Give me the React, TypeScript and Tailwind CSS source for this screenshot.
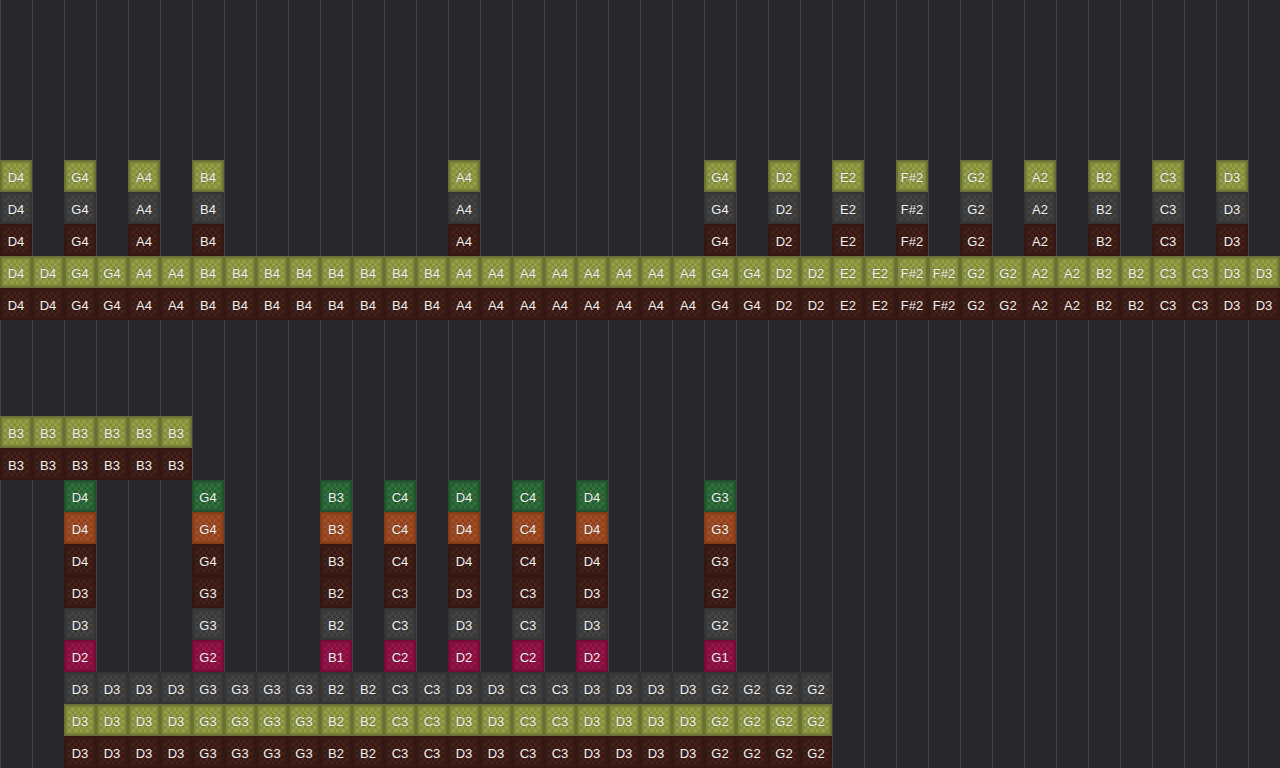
const styles = {
  olive: { frame: "border-[#6a7135]", rim: "border-[#838c3d]", fill: "bg-[conic-gradient(#99a24a_25%,#838c3c_0_50%,#99a24a_0_75%,#838c3c_0)]" },
  gray: { frame: "border-[#343435]", rim: "border-[#3b3b3c]", fill: "bg-[conic-gradient(#464647_25%,#383839_0_50%,#464647_0_75%,#383839_0)]" },
  brown: { frame: "border-[#331712]", rim: "border-[#3a1b15]", fill: "bg-[conic-gradient(#47221b_25%,#371913_0_50%,#47221b_0_75%,#371913_0)]" },
  green: { frame: "border-[#22522c]", rim: "border-[#286134]", fill: "bg-[conic-gradient(#32733e_25%,#265d31_0_50%,#32733e_0_75%,#265d31_0)]" },
  orange: { frame: "border-[#843d1a]", rim: "border-[#94461f]", fill: "bg-[conic-gradient(#a55029_25%,#8d421d_0_50%,#a55029_0_75%,#8d421d_0)]" },
  pink: { frame: "border-[#750c37]", rim: "border-[#881041]", fill: "bg-[conic-gradient(#9a164c_25%,#830f3f_0_50%,#9a164c_0_75%,#830f3f_0)]" },
};

type Kind = keyof typeof styles;
type Row = { kind: Kind; start: number; notes: string[] } | null;

const repeat = (spec: [string, number][]) => spec.flatMap(([n, c]) => Array<string>(c).fill(n));
const sparse = (spec: [number, string][]) => {
  const out: string[] = Array(40).fill("");
  spec.forEach(([i, n]) => (out[i] = n));
  return out;
};

const top = sparse([[0, "D4"], [2, "G4"], [4, "A4"], [6, "B4"], [14, "A4"], [22, "G4"], [24, "D2"], [26, "E2"], [28, "F#2"], [30, "G2"], [32, "A2"], [34, "B2"], [36, "C3"], [38, "D3"]]);
const wide = repeat([["D4", 2], ["G4", 2], ["A4", 2], ["B4", 8], ["A4", 8], ["G4", 2], ["D2", 2], ["E2", 2], ["F#2", 2], ["G2", 2], ["A2", 2], ["B2", 2], ["C3", 2], ["D3", 2]]);
const b3 = repeat([["B3", 6]]);
const colsAt = (n: string[]) => sparse([2, 6, 10, 12, 14, 16, 18, 22].map((c, i) => [c, n[i]] as [number, string]));
const upper = colsAt(["D4", "G4", "B3", "C4", "D4", "C4", "D4", "G3"]);
const middle = colsAt(["D3", "G3", "B2", "C3", "D3", "C3", "D3", "G2"]);
const lower = colsAt(["D2", "G2", "B1", "C2", "D2", "C2", "D2", "G1"]);
const bass = repeat([["D3", 4], ["G3", 4], ["B2", 2], ["C3", 2], ["D3", 2], ["C3", 2], ["D3", 4], ["G2", 4]]);

const rows: Row[] = [
  null, null, null, null, null,
  { kind: "olive", start: 0, notes: top },
  { kind: "gray", start: 0, notes: top },
  { kind: "brown", start: 0, notes: top },
  { kind: "olive", start: 0, notes: wide },
  { kind: "brown", start: 0, notes: wide },
  null, null, null,
  { kind: "olive", start: 0, notes: b3 },
  { kind: "brown", start: 0, notes: b3 },
  { kind: "green", start: 0, notes: upper },
  { kind: "orange", start: 0, notes: upper },
  { kind: "brown", start: 0, notes: upper },
  { kind: "brown", start: 0, notes: middle },
  { kind: "gray", start: 0, notes: middle },
  { kind: "pink", start: 0, notes: lower },
  { kind: "gray", start: 2, notes: bass },
  { kind: "olive", start: 2, notes: bass },
  { kind: "brown", start: 2, notes: bass },
];

function Tile({ kind, note }: { kind: Kind; note: string }) {
  const s = styles[kind];
  return (
    <div className={`h-8 w-8 border-2 ${s.frame}`}>
      <div className={`h-full w-full border-2 ${s.rim}`}>
        <div className={`flex h-full w-full items-center justify-center bg-size-[6px_6px] pt-0.5 text-[13px] leading-none text-[#f2f2f2] [text-shadow:0_0_2px_rgba(0,0,0,0.35)] ${s.fill}`}>
          <span className="whitespace-nowrap">{note}</span>
        </div>
      </div>
    </div>
  );
}

export default function App() {
  return (
    <div className="h-[768px] w-[1280px] overflow-hidden bg-[#28282a] font-['Liberation_Sans',Arial,sans-serif]">
      {rows.map((row, r) => (
        <div key={r} className="flex h-8">
          {Array.from({ length: 40 }, (_, c) => {
            const note = row ? row.notes[c - row.start] : "";
            return (
              <div key={c} className="h-8 w-8 shrink-0 border-l border-[#414244]">
                {row && note ? (
                  <div className="-ml-px">
                    <Tile kind={row.kind} note={note} />
                  </div>
                ) : null}
              </div>
            );
          })}
        </div>
      ))}
    </div>
  );
}
